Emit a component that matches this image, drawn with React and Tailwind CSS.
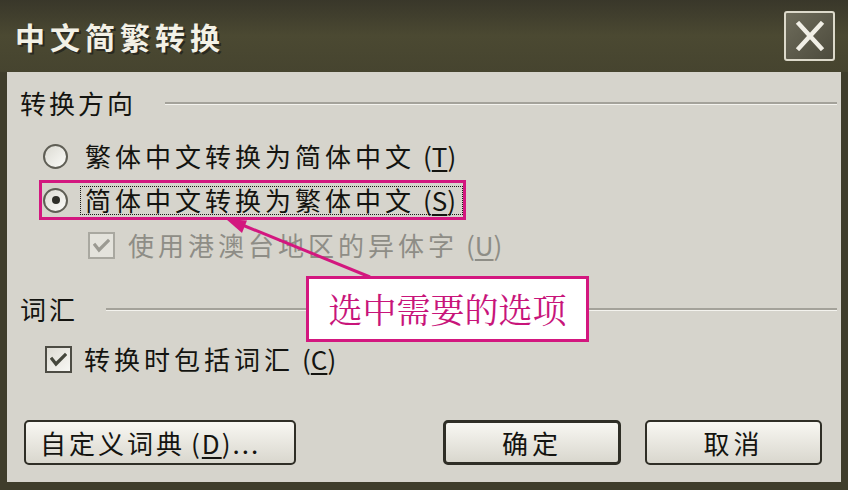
const Radio = ({ checked }) => (
  <div className="w-[25px] h-[25px] rounded-full border-[2px] border-[#5f5e55] bg-gradient-to-br from-[#dcdbd3] to-[#fbfbf8] flex items-center justify-center shrink-0">
    {checked && <div className="w-[8px] h-[8px] rounded-full bg-[#2e2e28]" />}
  </div>
);

const Check = ({ disabled }) => (
  <div
    className={
      disabled
        ? "w-[27px] h-[27px] border-[2px] border-[#a9a8a0] bg-[#e4e3dc] flex items-center justify-center shrink-0"
        : "w-[27px] h-[27px] border-[2px] border-[#4d4c44] bg-gradient-to-br from-[#dedcd4] to-[#f8f8f4] flex items-center justify-center shrink-0"
    }
  >
    <svg width="17" height="15" viewBox="0 0 17 15">
      <polyline
        points="2,7 6,12 15,3"
        fill="none"
        stroke={disabled ? "#9b9a92" : "#45473c"}
        strokeWidth="3.2"
        strokeLinecap="square"
      />
    </svg>
  </div>
);

const Mn = ({ k }) => (
  <span className="ml-[8px] tracking-normal">
    (<span className="underline underline-offset-[3px]">{k}</span>)
  </span>
);

const Sep = ({ ml }) => (
  <div className={`flex-1 h-0 border-t-[2px] border-t-[#a4a29a] border-b border-b-[#f4f3ee] ${ml}`} />
);

export default function App() {
  return (
    <div className="relative w-[848px] h-[490px] bg-[#3f3d2b] overflow-hidden font-['Noto_Sans_CJK_SC','Noto_Sans',sans-serif]">
      {/* Title bar */}
      <div className="h-[72px] flex items-center justify-between pl-[15px] pr-[13px] bg-gradient-to-b from-[#39372a] via-[#4b4932] to-[#46442f]">
        <span className="text-[30px] font-bold tracking-[5px] leading-none text-[#f3f1e6] [text-shadow:2px_2px_0_#2a2920]">
          中文简繁转换
        </span>
        <div className="w-[51px] h-[50px] border-[2px] border-[#dcd9ca] rounded-[3px] bg-gradient-to-br from-[#6e6c5b] to-[#4d4b3d] flex items-center justify-center">
          <svg width="30" height="30" viewBox="0 0 30 30">
            <path d="M4 3 L26 27 M26 3 L4 27" stroke="#f1efe6" strokeWidth="4.5" strokeLinecap="square" />
          </svg>
        </div>
      </div>

      {/* Body */}
      <div className="mx-[7px] h-[410px] bg-[#d6d4cc] flex flex-col text-[26px] leading-none text-[#141410]">
        {/* 转换方向 */}
        <div className="mt-[16px] h-[30px] flex items-center pl-[13px] pr-[4px]">
          <span className="tracking-[3px]">转换方向</span>
          <Sep ml="ml-[29px]" />
        </div>

        {/* radio 1 */}
        <div className="mt-[20px] h-[36px] flex items-center ml-[36px]">
          <Radio />
          <span className="ml-[17px] tracking-[4px]">
            繁体中文转换为简体中文
            <Mn k="T" />
          </span>
        </div>

        {/* radio 2 highlighted */}
        <div className="mt-[6px] h-[40px] w-fit flex items-center ml-[32px] border-[3px] border-[#d3177f] pl-[1px]">
          <Radio checked />
          <div className="ml-[12px] h-[29px] flex items-center border border-dotted border-[#1b1b18] pl-[4px] pr-[6px]">
            <span className="tracking-[4px]">
              简体中文转换为繁体中文
              <Mn k="S" />
            </span>
          </div>
        </div>

        {/* disabled checkbox */}
        <div className="mt-[8px] h-[34px] flex items-center ml-[81px]">
          <Check disabled />
          <span className="ml-[13px] tracking-[4px] text-[#8e8d86]">
            使用港澳台地区的异体字
            <Mn k="U" />
          </span>
        </div>

        {/* 词汇 */}
        <div className="mt-[32px] h-[30px] flex items-center pl-[13px] pr-[4px]">
          <span className="tracking-[3px]">词汇</span>
          <Sep ml="ml-[28px]" />
        </div>

        {/* checkbox 2 */}
        <div className="mt-[18px] h-[34px] flex items-center ml-[38px]">
          <Check />
          <span className="ml-[12px] tracking-[4px]">
            转换时包括词汇
            <Mn k="C" />
          </span>
        </div>

        {/* buttons */}
        <div className="mt-[44px] h-[45px] flex items-center justify-between pl-[17px] pr-[19px]">
          <button className="w-[272px] h-[45px] border-[2px] border-[#2f2e26] rounded-[5px] bg-gradient-to-b from-[#f8f7f2] to-[#d9d7ce] flex items-center pl-[14px]">
            <span className="tracking-[3px]">自定义词典</span>
            <span className="ml-[6px] tracking-[2px]">
              (<span className="underline underline-offset-[3px]">D</span>)...
            </span>
          </button>
          <div className="flex gap-[24px]">
            <button className="w-[178px] h-[45px] border-[3px] border-[#2f2e26] rounded-[5px] bg-gradient-to-b from-[#f8f7f2] to-[#d9d7ce] flex items-center justify-center tracking-[4px]">
              确定
            </button>
            <button className="w-[177px] h-[45px] border-[2px] border-[#2f2e26] rounded-[5px] bg-gradient-to-b from-[#f8f7f2] to-[#d9d7ce] flex items-center justify-center tracking-[4px]">
              取消
            </button>
          </div>
        </div>
      </div>

      {/* Arrow overlay */}
      <svg className="absolute left-0 top-0 pointer-events-none" width="848" height="490">
        <line x1="370" y1="277" x2="240" y2="224" stroke="#d3177f" strokeWidth="3" />
        <polygon points="226,219 247,220.5 242,233" fill="#d3177f" />
      </svg>

      {/* Callout */}
      <div className="absolute left-[306px] top-[276px] w-[283px] h-[66px] bg-white border-[3px] border-[#d3177f] flex items-center justify-center text-[34px] leading-none text-[#c8157a] font-['Noto_Serif_CJK_SC','Noto_Sans_CJK_SC',serif]">
        选中需要的选项
      </div>
    </div>
  );
}
